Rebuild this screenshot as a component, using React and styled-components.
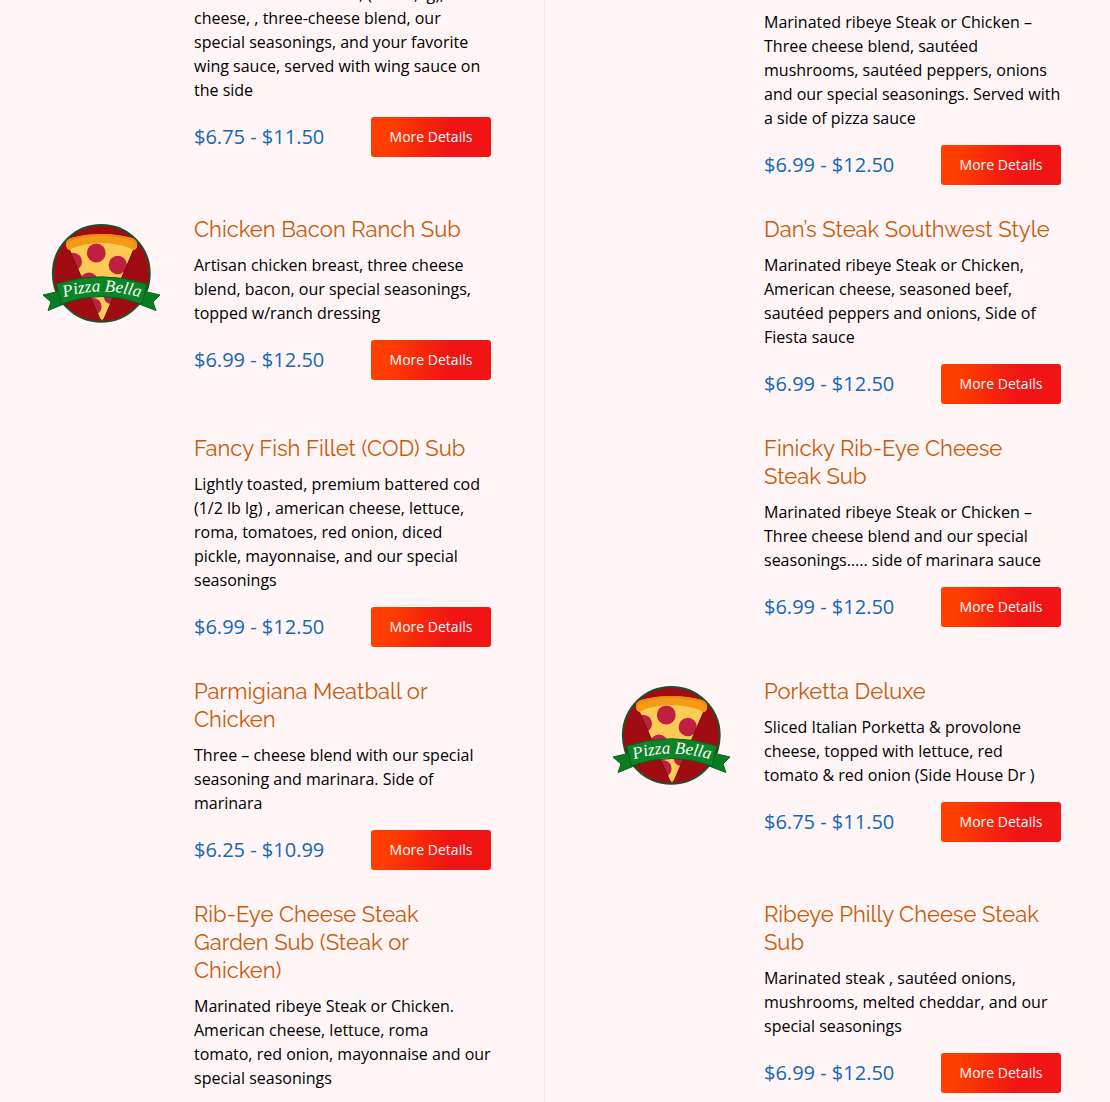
import React from "react";
import styled, { createGlobalStyle } from "styled-components";

const menu = [
  {
    title: "Buffalo Chicken Sub",
    text: "Artisan chicken breast, (1/2 lb, lg), blue cheese, , three-cheese blend, our special seasonings, and your favorite wing sauce, served with wing sauce on the side",
    price: "$6.75 - $11.50",
  },
  {
    title: "Dan’s Favorite Mushroom Cheese Steak Sub",
    text: "Marinated ribeye Steak or Chicken – Three cheese blend, sautéed mushrooms, sautéed peppers, onions and our special seasonings. Served with a side of pizza sauce",
    price: "$6.99 - $12.50",
  },
  {
    title: "Chicken Bacon Ranch Sub",
    text: "Artisan chicken breast, three cheese blend, bacon, our special seasonings, topped w/ranch dressing",
    price: "$6.99 - $12.50",
    logo: true,
  },
  {
    title: "Dan’s Steak Southwest Style",
    text: "Marinated ribeye Steak or Chicken, American cheese, seasoned beef, sautéed peppers and onions, Side of Fiesta sauce",
    price: "$6.99 - $12.50",
  },
  {
    title: "Fancy Fish Fillet (COD) Sub",
    text: "Lightly toasted, premium battered cod (1/2 lb lg) , american cheese, lettuce, roma, tomatoes, red onion, diced pickle, mayonnaise, and our special seasonings",
    price: "$6.99 - $12.50",
  },
  {
    title: "Finicky Rib-Eye Cheese Steak Sub",
    text: "Marinated ribeye Steak or Chicken – Three cheese blend and our special seasonings….. side of marinara sauce",
    price: "$6.99 - $12.50",
  },
  {
    title: "Parmigiana Meatball or Chicken",
    text: "Three – cheese blend with our special seasoning and marinara. Side of marinara",
    price: "$6.25 - $10.99",
  },
  {
    title: "Porketta Deluxe",
    text: "Sliced Italian Porketta & provolone cheese, topped with lettuce, red tomato & red onion (Side House Dr )",
    price: "$6.75 - $11.50",
    logo: true,
  },
  {
    title: "Rib-Eye Cheese Steak Garden Sub (Steak or Chicken)",
    text: "Marinated ribeye Steak or Chicken. American cheese, lettuce, roma tomato, red onion, mayonnaise and our special seasonings",
    price: "$6.99 - $12.50",
  },
  {
    title: "Ribeye Philly Cheese Steak Sub",
    text: "Marinated steak , sautéed onions, mushrooms, melted cheddar, and our special seasonings",
    price: "$6.99 - $12.50",
  },
];

function Logo({ id }) {
  return (
    <StyledLogo viewBox="0 0 120 120" role="img" aria-label="Pizza Bella">
      <defs>
        <clipPath id={`${id}-slice`}>
          <path d="M27 28 Q60 18 94 28 L92 36 L63 104 Q61 107 59 104 L29 36 Z" />
        </clipPath>
        <path id={`${id}-arc`} d="M18 84 Q61 69 104 84" />
      </defs>
      <circle cx="60.3" cy="58.4" r="48.4" fill="#a00c12" stroke="#1f4f2b" strokeWidth="2" />
      <g clipPath={`url(#${id}-slice)`}>
        <rect x="20" y="15" width="80" height="95" fill="#fdca55" />
        <g fill="#c0203f">
          <circle cx="55.3" cy="38" r="9.4" />
          <circle cx="76.8" cy="50" r="9.2" />
          <circle cx="32" cy="46.7" r="9" />
          <circle cx="48" cy="66.5" r="9" />
          <circle cx="52" cy="91.7" r="8.6" />
          <circle cx="70" cy="82" r="7" />
        </g>
      </g>
      <path
        d="M28 34 L59 104 Q61 107 63 104 L93 34"
        fill="none"
        stroke="#6d1010"
        strokeWidth="1"
      />
      <path
        d="M25 31 Q24 25 30 23 Q60 15 91 23 Q97 25 96 32 Q94 38 89 33 Q60 23 32 33 Q27 38 25 31 Z"
        fill="#f59a17"
      />
      <path
        d="M25 31 Q24 25 30 23 Q60 15 91 23 Q97 25 96 32 Q95 28 90 25 Q60 17 31 25 Q26 27 25 31 Z"
        fill="#ea8a10"
      />
      <path d="M2 80 L19 76 L23 89 L7 95.5 L10 87 Z" fill="#0a7d22" stroke="#07611b" />
      <path d="M119 80 L102 76 L98 89 L115 95.5 L112 87 Z" fill="#0a7d22" stroke="#07611b" />
      <path
        d="M15.5 69 Q60 54.5 106 69 L101 89 Q60 74 20.5 89 Z"
        fill="#0b8527"
        stroke="#07611b"
      />
      <LogoText>
        <textPath href={`#${id}-arc`} startOffset="50%" textAnchor="middle">
          Pizza Bella
        </textPath>
      </LogoText>
    </StyledLogo>
  );
}

function MenuItem({ item, id }) {
  return (
    <StyledItem>
      <StyledFigure>{item.logo && <Logo id={id} />}</StyledFigure>
      <StyledContent>
        <StyledTitle>{item.title}</StyledTitle>
        <StyledText>{item.text}</StyledText>
        <StyledFooter>
          <StyledPrice>{item.price}</StyledPrice>
          <StyledButton href="#details">More Details</StyledButton>
        </StyledFooter>
      </StyledContent>
    </StyledItem>
  );
}

export default function App() {
  return (
    <StyledPage>
      <GlobalStyle />
      <StyledMenu>
        {menu.map((item, index) => (
          <MenuItem key={item.title} item={item} id={`item${index}`} />
        ))}
      </StyledMenu>
    </StyledPage>
  );
}

const GlobalStyle = createGlobalStyle`
  * {
    box-sizing: border-box;
    margin: 0;
    padding: 0;
  }

  body {
    background-color: #fff5f6;
    color: #000000;
    font-family: "Open Sans", sans-serif;
  }
`;

const StyledPage = styled.main`
  height: 100vh;
  overflow: hidden;
`;

const StyledMenu = styled.ul`
  display: grid;
  grid-template-columns: 1fr 1fr;
  column-gap: 120px;
  margin-top: -56px;
  padding: 0 49px 0 41px;
  list-style: none;
`;

const StyledItem = styled.li`
  display: flex;
  gap: 33px;
  padding-bottom: 30px;

  &:nth-child(odd) {
    margin-right: -54px;
    padding-right: 53px;
    border-right: 1px solid #f6eaec;
  }
`;

const StyledFigure = styled.figure`
  flex: 0 0 120px;
`;

const StyledLogo = styled.svg`
  display: block;
  width: 120px;
  height: 120px;
`;

const LogoText = styled.text`
  fill: #ffffff;
  font-family: "Liberation Serif", serif;
  font-size: 17px;
  font-style: italic;
`;

const StyledContent = styled.div`
  flex: 1;
  min-width: 0;
`;

const StyledTitle = styled.h3`
  margin-bottom: 10px;
  color: #c95a08;
  font-family: Raleway, Lato, sans-serif;
  font-size: 22px;
  font-weight: 400;
  line-height: 28px;
`;

const StyledText = styled.p`
  margin-bottom: 15px;
  font-size: 16px;
  line-height: 24px;
`;

const StyledFooter = styled.div`
  display: flex;
  align-items: center;
  justify-content: space-between;
`;

const StyledPrice = styled.span`
  color: #1269b5;
  font-size: 20px;
  line-height: 40px;
`;

const StyledButton = styled.a`
  width: 120px;
  border-radius: 3px;
  background: linear-gradient(100deg, #ff3e00 15%, #f01414 65%);
  color: #ffffff;
  font-size: 14px;
  line-height: 40px;
  text-align: center;
  text-decoration: none;
`;
